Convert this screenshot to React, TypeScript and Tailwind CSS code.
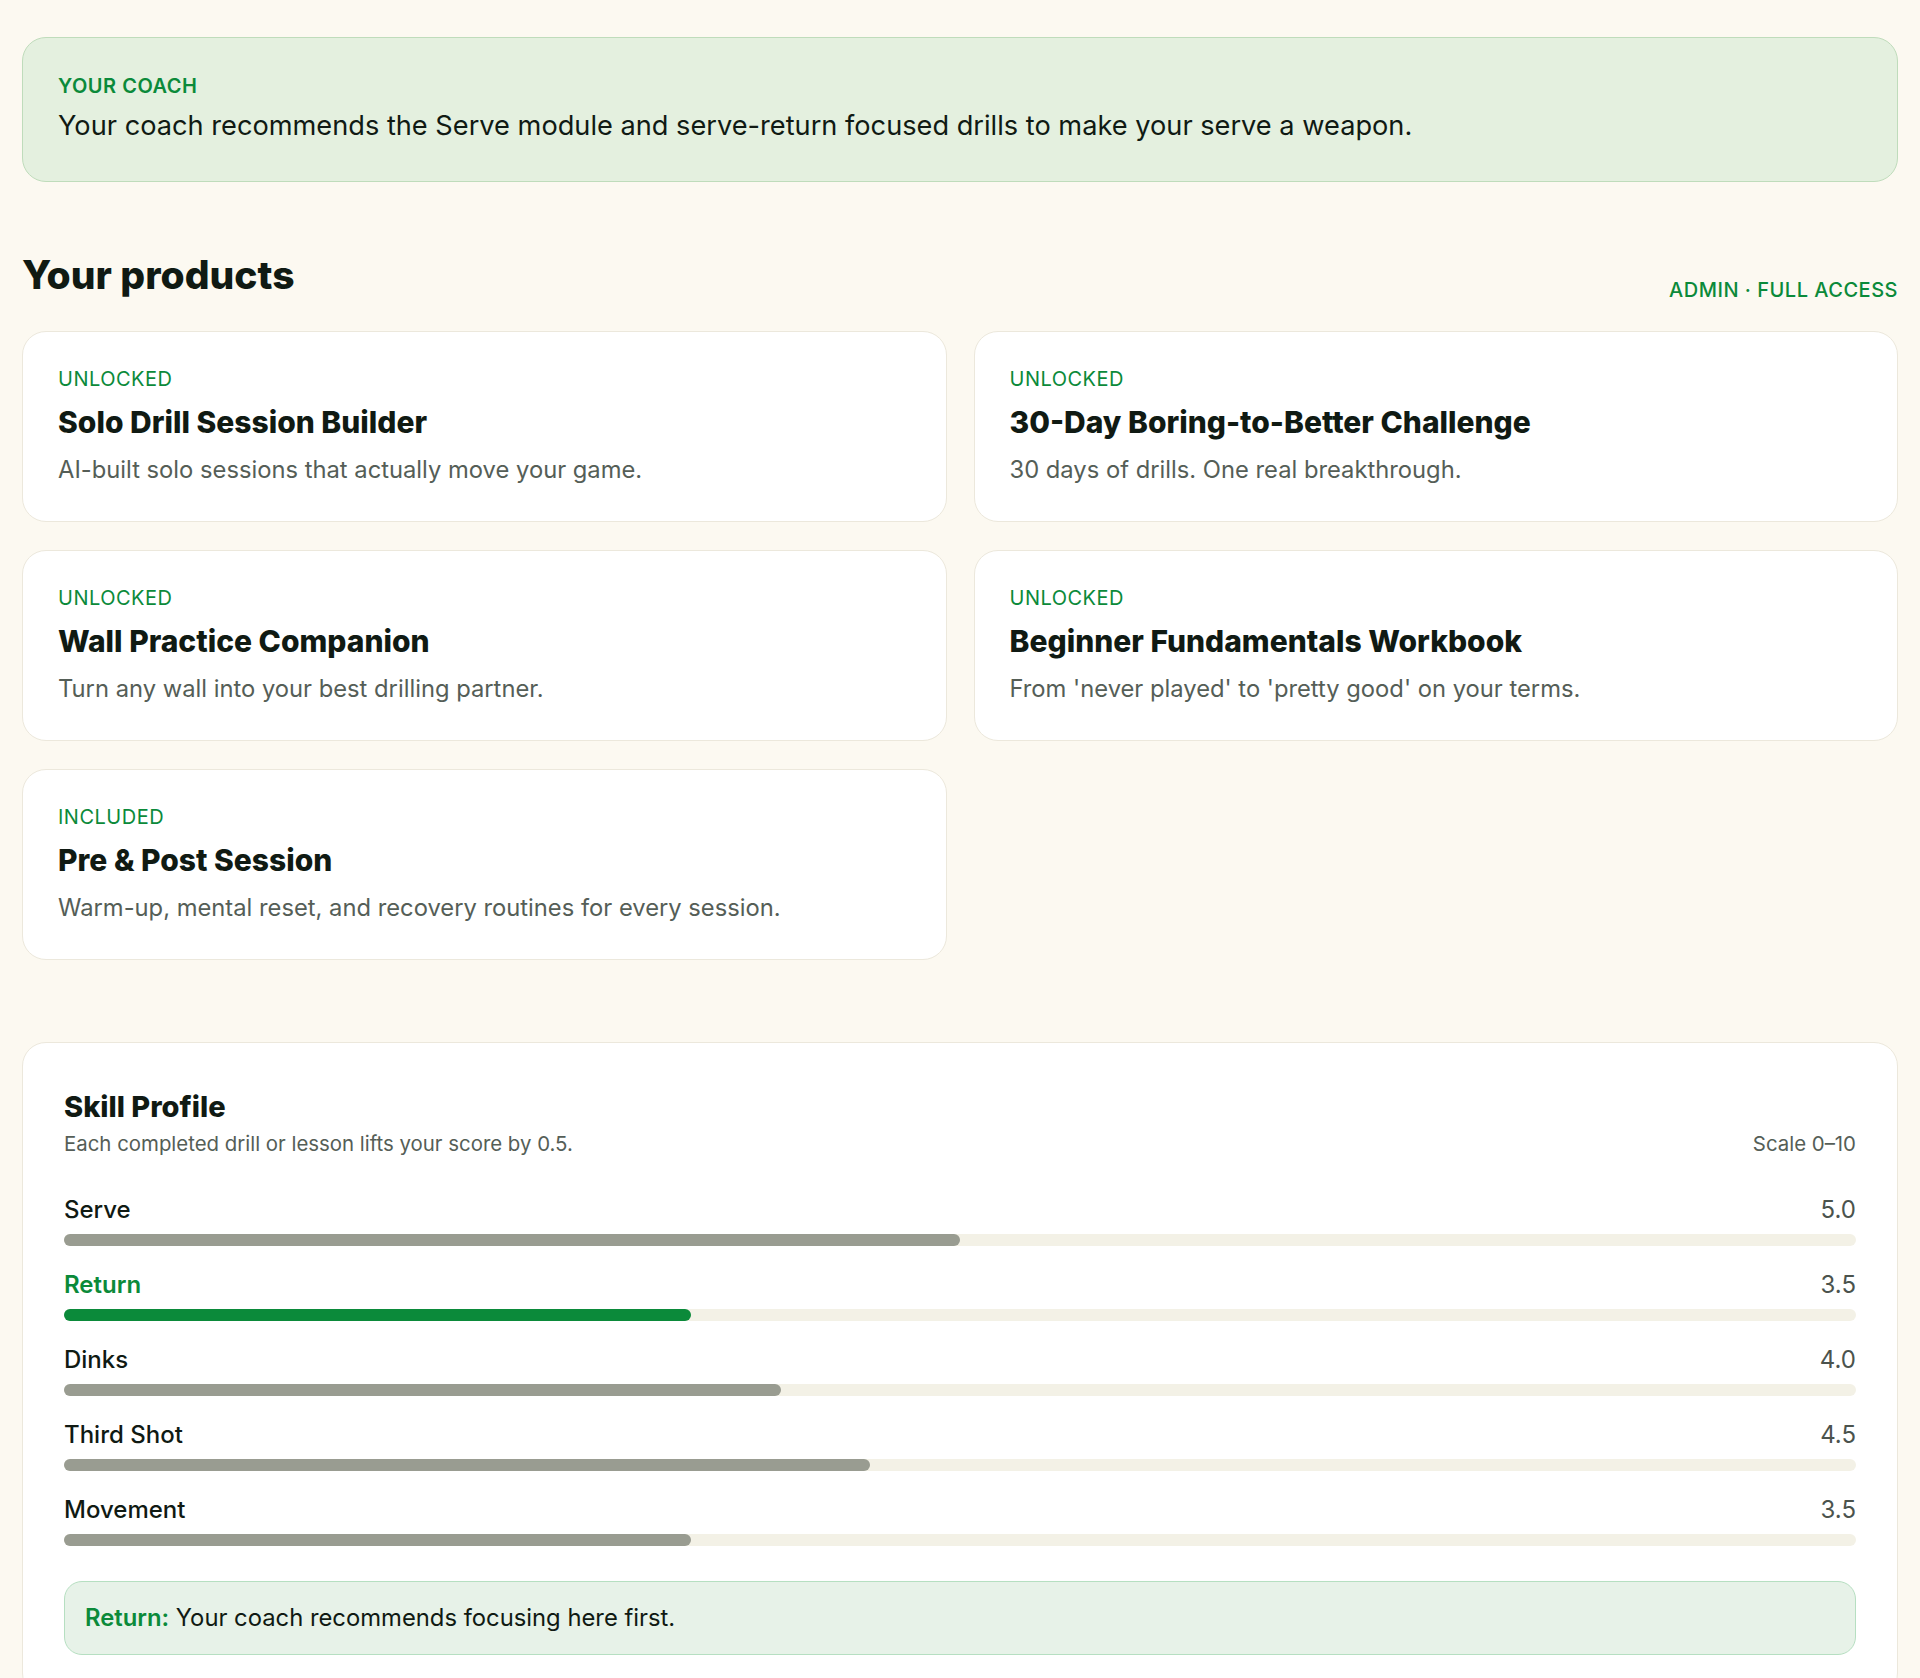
const PRODUCTS = [
  { tag: 'UNLOCKED', title: 'Solo Drill Session Builder', desc: 'AI-built solo sessions that actually move your game.' },
  { tag: 'UNLOCKED', title: '30-Day Boring-to-Better Challenge', desc: '30 days of drills. One real breakthrough.' },
  { tag: 'UNLOCKED', title: 'Wall Practice Companion', desc: 'Turn any wall into your best drilling partner.' },
  { tag: 'UNLOCKED', title: 'Beginner Fundamentals Workbook', desc: "From 'never played' to 'pretty good' on your terms." },
  { tag: 'INCLUDED', title: 'Pre & Post Session', desc: 'Warm-up, mental reset, and recovery routines for every session.' },
];

const SKILLS = [
  { name: 'Serve', score: 5.0 },
  { name: 'Return', score: 3.5, focus: true },
  { name: 'Dinks', score: 4.0 },
  { name: 'Third Shot', score: 4.5 },
  { name: 'Movement', score: 3.5 },
];

function App() {
  return (
    <div className="min-h-screen bg-[#fcf9f1] px-[22px] pt-[37px] pb-[20px] font-['Inter',sans-serif] text-[#101a13]">
      {/* Coach banner */}
      <section className="rounded-3xl border border-[#bfdcbb] bg-[#e4f0df] px-[35px] pt-[33px] pb-[35px]">
        <p className="text-[20px] leading-[30px] font-semibold tracking-wide text-[#0b8a3a]">YOUR COACH</p>
        <p className="mt-[5px] text-[27.2px] leading-[40px]">
          Your coach recommends the Serve module and serve-return focused drills to make your serve a weapon.
        </p>
      </section>

      {/* Products */}
      <div className="mt-[63px] mb-[26px] flex items-end justify-between">
        <h2 className="text-[39px] leading-[60px] font-extrabold">Your products</h2>
        <span className="text-[20px] leading-[30px] font-medium tracking-wide text-[#0b8a3a]">ADMIN · FULL ACCESS</span>
      </div>

      <div className="grid grid-cols-2 gap-x-[27px] gap-y-[28px]">
        {PRODUCTS.map((p) => (
          <ProductCard key={p.title} {...p} />
        ))}
      </div>

      {/* Skill profile */}
      <section className="mt-[82px] rounded-3xl border border-[#ece8dc] bg-white px-[41px] pt-[46px] pb-[41px]">
        <h3 className="text-[29px] leading-[36px] font-extrabold">Skill Profile</h3>
        <div className="mt-[4px] flex items-center justify-between text-[20.4px] leading-[30px] text-[#555e57]">
          <span>Each completed drill or lesson lifts your score by 0.5.</span>
          <span>Scale 0–10</span>
        </div>

        <div className="mt-[34px] flex flex-col gap-[22px]">
          {SKILLS.map((s) => (
            <SkillBar key={s.name} {...s} />
          ))}
        </div>

        <div className="mt-[35px] rounded-[18px] border border-[#b6dfc1] bg-[#e7f2e8] px-[20px] py-[19px] text-[23.8px] leading-[34px]">
          <span className="font-semibold text-[#0b8a3a]">Return:</span> Your coach recommends focusing here first.
        </div>
      </section>
    </div>
  );
}

function ProductCard({ tag, title, desc }: { tag: string; title: string; desc: string }) {
  return (
    <div className="rounded-3xl border border-[#ece8dc] bg-white px-[35px] pt-[32px] pb-[34px]">
      <p className="text-[20px] leading-[30px] tracking-wide text-[#0b8a3a]">{tag}</p>
      <h4 className="mt-[10px] text-[30px] leading-[36px] font-extrabold">{title}</h4>
      <p className="mt-[13px] text-[23.75px] leading-[34px] text-[#555e57]">{desc}</p>
    </div>
  );
}

function SkillBar({ name, score, focus }: { name: string; score: number; focus?: boolean }) {
  return (
    <div>
      <div className="flex items-center justify-between text-[24px] leading-[34px]">
        <span className={focus ? 'font-semibold text-[#0b8a3a]' : 'font-medium'}>{name}</span>
        <span className="text-[#4b534d]">{score.toFixed(1)}</span>
      </div>
      <div className="mt-[7px] h-[12px] rounded-full bg-[#f3f1e6]">
        <div
          className={focus ? 'h-full rounded-full bg-[#0b8a3a]' : 'h-full rounded-full bg-[#999c91]'}
          style={{ width: `${score * 10}%` }}
        />
      </div>
    </div>
  );
}

export default App;
